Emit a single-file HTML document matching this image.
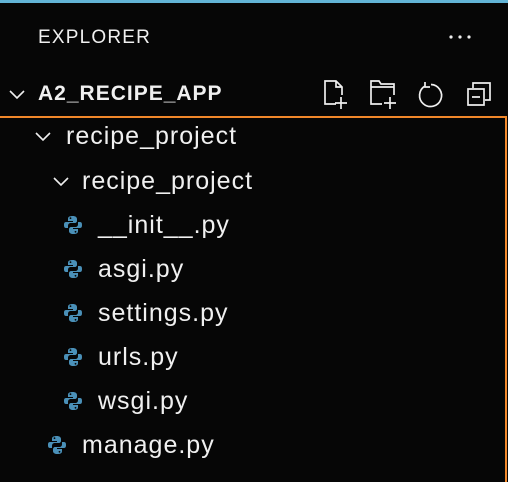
<!DOCTYPE html>
<html><head><style>
html,body{margin:0;width:508px;height:482px;overflow:hidden}
body{background:#060606;font-family:"Liberation Sans",sans-serif;color:#f0f0f0;position:relative}
.top{position:absolute;left:0;top:0;width:508px;height:3px;background:#62b4d6}
.t{position:absolute;white-space:nowrap}
.box{position:absolute;left:0;top:116px;width:505px;height:380px;border-top:2px solid #f0872a;border-right:2px solid #f0872a}
svg{position:absolute}
.row{position:absolute;font-size:25px;letter-spacing:1px;line-height:44px;height:44px;white-space:nowrap}
</style></head><body>
<div class="top"></div>
<div class="t" style="left:38px;top:27px;font-size:19px;letter-spacing:1.2px">EXPLORER</div>
<svg style="left:448px;top:34px" width="26" height="6" viewBox="0 0 26 6"><circle cx="3" cy="3" r="1.6" fill="#eee"/><circle cx="12" cy="3" r="1.6" fill="#eee"/><circle cx="21" cy="3" r="1.6" fill="#eee"/></svg>
<svg style="left:8px;top:88px" width="18" height="14" viewBox="0 0 18 14"><path d="M2 3l7 7 7-7" fill="none" stroke="#eee" stroke-width="1.6"/></svg>
<div class="t" style="left:38px;top:82px;font-size:21px;font-weight:bold;letter-spacing:1px">A2_RECIPE_APP</div>
<svg style="left:322px;top:78px" width="34" height="32" viewBox="0 0 34 32" fill="none" stroke="#eee" stroke-width="1.7"><path d="M14 26H3V3h11l6 6v8M14 3v6h6M13 25h12M19 19v12"/></svg>
<svg style="left:368px;top:78px" width="36" height="32" viewBox="0 0 36 32" fill="none" stroke="#eee" stroke-width="1.7"><path d="M14 26H3V3h8l2 3h13v11M3 9h23M16 25h12M22 19v12"/></svg>
<svg style="left:416px;top:80px" width="30" height="30" viewBox="0 0 30 30" fill="none" stroke="#eee" stroke-width="1.7"><path d="M9 6a11 11 0 1 0 6-1.5M9 2v5h5"/></svg>
<svg style="left:464px;top:80px" width="30" height="30" viewBox="0 0 30 30" fill="none" stroke="#eee" stroke-width="1.7"><path d="M9 8V3h17v17h-5M4 9h16v16H4zM8 17h8"/></svg>
<div class="box"></div>
<svg style="left:34px;top:130px" width="18" height="14" viewBox="0 0 18 14"><path d="M2 3l7 7 7-7" fill="none" stroke="#eee" stroke-width="1.6"/></svg>
<div class="row" style="left:66px;top:114px">recipe_project</div>
<svg style="left:52px;top:175px" width="18" height="14" viewBox="0 0 18 14"><path d="M2 3l7 7 7-7" fill="none" stroke="#eee" stroke-width="1.6"/></svg>
<div class="row" style="left:82px;top:159px">recipe_project</div>
<div class="row" style="left:98px;top:203px">__init__.py</div>
<div class="row" style="left:98px;top:247px">asgi.py</div>
<div class="row" style="left:98px;top:291px">settings.py</div>
<div class="row" style="left:98px;top:335px">urls.py</div>
<div class="row" style="left:98px;top:379px">wsgi.py</div>
<div class="row" style="left:82px;top:423px">manage.py</div>
<svg width="0" height="0"><defs><g id="py"><path d="M10 1C6 1 5 2 5 4v2h5v1H3C1 7 1 9 1 10s0 3 2 3h2v-2c0-2 1-3 3-3h4c1 0 2-1 2-2V4c0-2-2-3-4-3z" fill="#4a90b8"/><path d="M10 19c4 0 5-1 5-3v-2h-5v-1h7c2 0 2-2 2-3s0-3-2-3h-2v2c0 2-1 3-3 3H8c-1 0-2 1-2 2v2c0 2 2 3 4 3z" fill="#4a90b8"/><circle cx="7.5" cy="3.2" r="0.9" fill="#060606"/><circle cx="12.5" cy="16.8" r="0.9" fill="#060606"/></g></defs></svg>
<svg style="left:63px;top:215px" width="20" height="20" viewBox="0 0 20 20"><use href="#py"/></svg>
<svg style="left:63px;top:259px" width="20" height="20" viewBox="0 0 20 20"><use href="#py"/></svg>
<svg style="left:63px;top:303px" width="20" height="20" viewBox="0 0 20 20"><use href="#py"/></svg>
<svg style="left:63px;top:347px" width="20" height="20" viewBox="0 0 20 20"><use href="#py"/></svg>
<svg style="left:63px;top:391px" width="20" height="20" viewBox="0 0 20 20"><use href="#py"/></svg>
<svg style="left:47px;top:435px" width="20" height="20" viewBox="0 0 20 20"><use href="#py"/></svg>
</body></html>
